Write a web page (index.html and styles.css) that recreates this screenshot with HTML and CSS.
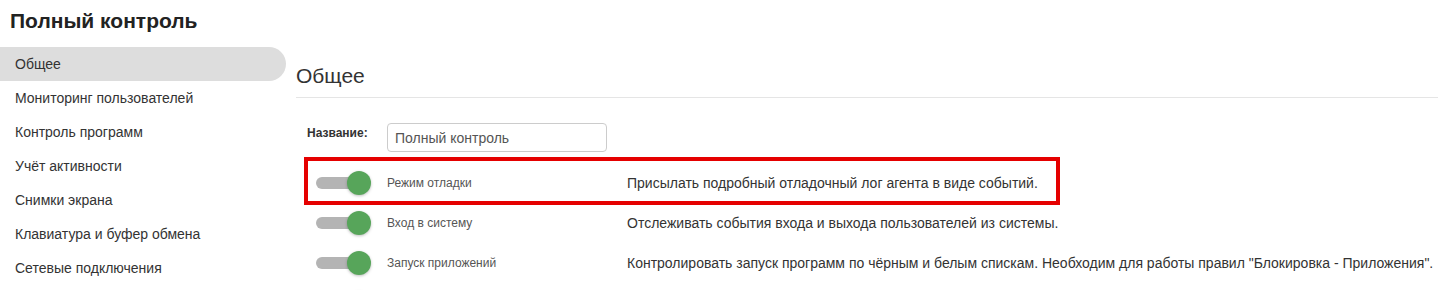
FILE: index.html
```html
<!DOCTYPE html>
<html lang="ru">
<head>
<meta charset="utf-8">
<title>Полный контроль</title>
<link rel="stylesheet" href="styles.css">
</head>
<body>
<h1 class="page-title">Полный контроль</h1>
<div class="layout">
  <nav class="sidebar">
    <a class="nav-item active">Общее</a>
    <a class="nav-item">Мониторинг пользователей</a>
    <a class="nav-item">Контроль программ</a>
    <a class="nav-item">Учёт активности</a>
    <a class="nav-item">Снимки экрана</a>
    <a class="nav-item">Клавиатура и буфер обмена</a>
    <a class="nav-item">Сетевые подключения</a>
  </nav>
  <main class="content">
    <h2 class="section-title">Общее</h2>
    <div class="name-row">
      <label class="name-label">Название:</label>
      <input class="name-input" type="text" value="Полный контроль">
    </div>
    <div class="opt-row highlighted">
      <span class="toggle"><span class="track"></span><span class="knob"></span></span>
      <span class="opt-label">Режим отладки</span>
      <span class="opt-desc">Присылать подробный отладочный лог агента в виде событий.</span>
      <span class="annot"></span>
    </div>
    <div class="opt-row">
      <span class="toggle"><span class="track"></span><span class="knob"></span></span>
      <span class="opt-label">Вход в систему</span>
      <span class="opt-desc">Отслеживать события входа и выхода пользователей из системы.</span>
    </div>
    <div class="opt-row">
      <span class="toggle"><span class="track"></span><span class="knob"></span></span>
      <span class="opt-label">Запуск приложений</span>
      <span class="opt-desc">Контролировать запуск программ по чёрным и белым спискам. Необходим для работы правил "Блокировка - Приложения".</span>
    </div>
    <div class="opt-row">
      <span class="toggle"><span class="track"></span><span class="knob"></span></span>
    </div>
  </main>
</div>
</body>
</html>
```

FILE: styles.css
```css
html, body {
  margin: 0;
  padding: 0;
  background: #fff;
  overflow: hidden;
}
body {
  font-family: "Liberation Sans", Arial, sans-serif;
  color: #333;
  width: 1438px;
  height: 290px;
}
.page-title {
  margin: 0;
  padding: 9px 0 0 10px;
  height: 38px;
  font-size: 21px;
  line-height: 24px;
  font-weight: bold;
  color: #222;
}
.layout {
  display: flex;
  align-items: flex-start;
}
.sidebar {
  width: 286px;
  flex: 0 0 286px;
  display: flex;
  flex-direction: column;
}
.nav-item {
  display: block;
  height: 34px;
  line-height: 34px;
  padding-left: 15px;
  font-size: 14px;
  color: #333;
  border-radius: 0 17px 17px 0;
}
.nav-item.active {
  background: #dddddd;
}
.content {
  flex: 1;
  margin-left: 10px;
  padding-top: 17px;
}
.section-title {
  margin: 0;
  font-size: 21px;
  line-height: 24px;
  font-weight: normal;
  color: #333;
  padding-bottom: 9px;
  border-bottom: 1px solid #e5e5e5;
  margin-bottom: 25px;
}
.name-row {
  display: flex;
  align-items: flex-start;
  height: 29px;
  margin-bottom: 11px;
}
.name-label {
  width: 80px;
  padding-left: 11px;
  padding-top: 2px;
  font-size: 12px;
  line-height: 17px;
  font-weight: bold;
  color: #333;
}
.name-input {
  box-sizing: border-box;
  width: 220px;
  height: 29px;
  border: 1px solid #cccccc;
  border-radius: 4px;
  padding: 0 7px;
  font-family: "Liberation Sans", Arial, sans-serif;
  font-size: 14px;
  color: #555;
  margin: 0;
}
.opt-row {
  position: relative;
  display: flex;
  align-items: center;
  height: 40px;
  padding-left: 20px;
  white-space: nowrap;
}
.toggle {
  position: relative;
  display: block;
  width: 55px;
  height: 24px;
  flex: 0 0 55px;
}
.track {
  position: absolute;
  left: 0;
  top: 6px;
  width: 44px;
  height: 12px;
  border-radius: 6px;
  background: #b4b4b4;
}
.knob {
  position: absolute;
  right: 0;
  top: 0;
  width: 24px;
  height: 24px;
  border-radius: 50%;
  background: #57a55a;
  box-shadow: 0 1px 3px rgba(0, 0, 0, 0.25);
}
.opt-label {
  width: 240px;
  margin-left: 16px;
  font-size: 12px;
  color: #555;
}
.opt-desc {
  font-size: 14px;
  color: #333;
}
.annot {
  position: absolute;
  left: 8px;
  top: -6px;
  width: 756px;
  height: 48px;
  box-sizing: border-box;
  border: 4px solid #e50000;
  pointer-events: none;
}
```
